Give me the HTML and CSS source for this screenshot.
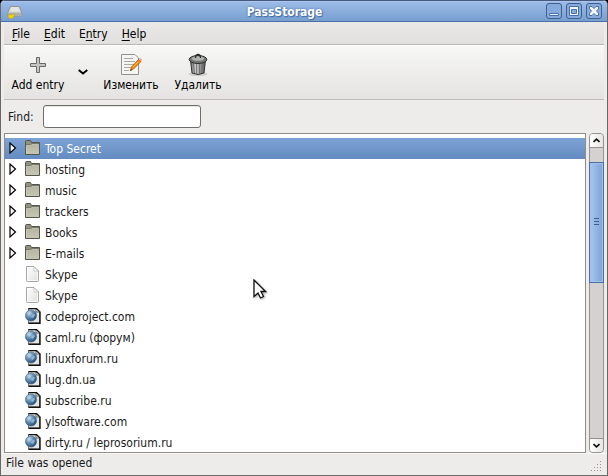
FILE: index.html
```html
<!DOCTYPE html>
<html lang="en">
<head>
<meta charset="utf-8">
<title>PassStorage</title>
<link rel="stylesheet" href="styles.css">
</head>
<body>
<svg width="0" height="0" class="defs">
  <defs>
    <linearGradient id="g-folder" x2="0" y2="1"><stop offset="0" stop-color="#b5b5a0"/><stop offset="1" stop-color="#c6c6b4"/></linearGradient>
    <linearGradient id="g-page" x2="1" y2="1"><stop offset="0" stop-color="#fff"/><stop offset="1" stop-color="#e0e0de"/></linearGradient>
    <linearGradient id="g-can" x2="1" y2="0"><stop offset="0" stop-color="#666"/><stop offset=".35" stop-color="#d0d0d0"/><stop offset="1" stop-color="#555"/></linearGradient>
    <radialGradient id="g-globe" cx=".35" cy=".3" r=".75"><stop offset="0" stop-color="#c5dcec"/><stop offset=".45" stop-color="#6590b8"/><stop offset="1" stop-color="#204a74"/></radialGradient>
    <symbol id="folder" viewBox="0 0 16 16">
      <path d="M.5 14.500V1.500Q.5 .5 1.500 .5H5.500L6.500 2.500H14.500V14.500Z" fill="#929280" stroke="#55564b"/>
      <path d="M1 4.500H5L6.500 3.500H14" fill="none" stroke="#777868"/>
      <path d="M1 5.500H6L7 4.500H14V14H1Z" fill="url(#g-folder)"/>
      <path d="M1.500 13.500V5.500H6L7 4.500H13.500" fill="none" stroke="#d2d2c4" stroke-width=".6"/>
    </symbol>
    <symbol id="page" viewBox="0 0 16 16">
      <path d="M1.500 .5H9L13.500 5V14.500Q13.500 15.500 12.500 15.500H2.500Q1.500 15.500 1.500 14.500Z" fill="url(#g-page)" stroke="#a6a6a2"/>
      <path d="M9 1.500H2.500V14.500H12.500V6" fill="none" stroke="#fff" stroke-width=".7"/>
      <path d="M9 1V5H13Z" fill="#fff" stroke="#bbb" stroke-width=".7"/>
    </symbol>
    <symbol id="web" viewBox="0 0 16 16">
      <path d="M3.500 .5H11.500L14.500 3.500V15.200H3.500Z" fill="#e4e5e2" stroke="#777"/>
      <path d="M3.500 15.200H15V4L11.500.6H3.500" fill="none" stroke="#111" stroke-width="1.400"/>
      <path d="M11 1V4H14.500Z" fill="#fff" stroke="#222" stroke-width=".7"/>
      <circle cx="6" cy="7.500" r="5.600" fill="url(#g-globe)" stroke="#456784" stroke-width=".6"/>
      <path d="M2 5Q4 2.500 6 4L5 6 3 7ZM7 7Q9 5 10 7L8 10 6 9Z" fill="#b4cede" opacity=".65"/>
    </symbol>
  </defs>
</svg>
<div class="window">
  <header class="titlebar">
    <svg class="app-icon" viewBox="0 0 16 14"><path d="M3.500 1.500H12L14.500 7V11H1V7Z" fill="#d9dbd6" stroke="#92958f"/><path d="M1.500 7.500H14.500V11H1.500Z" fill="#aeb0ab"/><path d="M4 3H11.500M3.500 5H12.500" stroke="#eee"/><path d="M1.500 9L4 10 7 8.500V12L5 13.500H2.500L1 12Z" fill="#ecd21c" stroke="#b59b0b" stroke-width=".5"/></svg>
    <h1>PassStorage</h1>
    <div class="controls">
      <svg viewBox="0 0 16 16"><rect x=".5" y=".5" width="15" height="15" rx="2.500"/><path class="glyph" d="M3.500 10.500h9v2h-9z"/></svg>
      <svg viewBox="0 0 16 16"><rect x=".5" y=".5" width="15" height="15" rx="2.500"/><path class="glyph" fill-rule="evenodd" d="M3.500 3.500h9v9h-9zM5.500 6.500v4h5v-4z"/></svg>
      <svg viewBox="0 0 16 16"><rect x=".5" y=".5" width="15" height="15" rx="2.500"/><path class="glyph" d="M3.500 3.500H6L8 5.500 10 3.500H12.500V6L10.500 8 12.500 10V12.500H10L8 10.500 6 12.500H3.500V10L5.500 8 3.500 6Z"/></svg>
    </div>
  </header>
  <nav class="menubar"><span><u>F</u>ile</span><span><u>E</u>dit</span><span>E<u>n</u>try</span><span><u>H</u>elp</span></nav>
  <div class="toolbar">
    <button class="tool add"><svg viewBox="0 0 24 24"><path d="M10.500 4.500h3v6h6v3h-6v6h-3v-6h-6v-3h6z" fill="#c5c5c5" stroke="#696969"/></svg><span>Add entry</span></button>
    <button class="drop"><svg viewBox="0 0 10 6"><path d="M.7 1L5 4.500 9.300 1" fill="none" stroke="#000" stroke-width="1.900"/></svg></button>
    <button class="tool edit"><svg viewBox="0 0 24 24"><path d="M2.500 1.500H16L19.500 5V21.500H2.500Z" fill="#f5f5f4" stroke="#92938f"/><path d="M5 5.500H14M5 8.500H16M5 11.500H15M5 14.500H12M5 17.500H10" stroke="#aaa"/><path d="M19.500 6.500L22 8.500 14.500 16 11.500 17.500 12.500 14Z" fill="#f78b12" stroke="#b95400" stroke-width=".8"/><path d="M19 9L14 14" stroke="#ffc04e"/><path d="M20.300 5.500L22.700 7.500" stroke="#e7a8a0" stroke-width="2"/><path d="M11 18L12 16 13 17Z" fill="#222"/></svg><span>Изменить</span></button>
    <button class="tool del"><svg viewBox="0 0 24 24"><ellipse cx="12" cy="21" rx="9.500" ry="2" fill="#ccc"/><path d="M4.500 7L6 20Q12 23 18 20L19.500 7Z" fill="url(#g-can)" stroke="#333"/><path d="M7.500 10L8.500 20M10.500 11V21M13.500 11V21M16.500 10L15.500 20" stroke="#666" stroke-width=".8"/><ellipse cx="12" cy="6.500" rx="8.800" ry="4" fill="#757773" stroke="#2c2c2c"/><ellipse cx="12" cy="5.500" rx="6" ry="2.300" fill="#b2b4b0"/><path d="M9.500 5Q9.500 1.500 12 1.500T14.500 5" fill="none" stroke="#2c2c2c" stroke-width="1.300"/></svg><span>Удалить</span></button>
  </div>
  <div class="find"><label for="q">Find:</label><input id="q" type="text"></div>
  <main class="content">
    <ul class="list">
      <li class="selected"><svg class="arrow" viewBox="0 0 8 12"><path d="M1 1V11L6.500 6Z"/></svg><svg class="icon"><use href="#folder"/></svg><span>Top Secret</span></li>
      <li><svg class="arrow" viewBox="0 0 8 12"><path d="M1 1V11L6.500 6Z"/></svg><svg class="icon"><use href="#folder"/></svg><span>hosting</span></li>
      <li><svg class="arrow" viewBox="0 0 8 12"><path d="M1 1V11L6.500 6Z"/></svg><svg class="icon"><use href="#folder"/></svg><span>music</span></li>
      <li><svg class="arrow" viewBox="0 0 8 12"><path d="M1 1V11L6.500 6Z"/></svg><svg class="icon"><use href="#folder"/></svg><span>trackers</span></li>
      <li><svg class="arrow" viewBox="0 0 8 12"><path d="M1 1V11L6.500 6Z"/></svg><svg class="icon"><use href="#folder"/></svg><span>Books</span></li>
      <li><svg class="arrow" viewBox="0 0 8 12"><path d="M1 1V11L6.500 6Z"/></svg><svg class="icon"><use href="#folder"/></svg><span>E-mails</span></li>
      <li class="leaf"><svg class="icon"><use href="#page"/></svg><span>Skype</span></li>
      <li class="leaf"><svg class="icon"><use href="#page"/></svg><span>Skype</span></li>
      <li class="leaf"><svg class="icon"><use href="#web"/></svg><span>codeproject.com</span></li>
      <li class="leaf"><svg class="icon"><use href="#web"/></svg><span>caml.ru (форум)</span></li>
      <li class="leaf"><svg class="icon"><use href="#web"/></svg><span>linuxforum.ru</span></li>
      <li class="leaf"><svg class="icon"><use href="#web"/></svg><span>lug.dn.ua</span></li>
      <li class="leaf"><svg class="icon"><use href="#web"/></svg><span>subscribe.ru</span></li>
      <li class="leaf"><svg class="icon"><use href="#web"/></svg><span>ylsoftware.com</span></li>
      <li class="leaf"><svg class="icon"><use href="#web"/></svg><span>dirty.ru / leprosorium.ru</span></li>
    </ul>
    <div class="scrollbar">
      <div class="step up"><svg viewBox="0 0 7 5"><path d="M.5 4L3.500 1.200 6.500 4"/></svg></div>
      <div class="thumb"><i></i><i></i><i></i></div>
      <div class="step down"><svg viewBox="0 0 7 5"><path d="M.5 1L3.500 3.800 6.500 1"/></svg></div>
    </div>
  </main>
  <footer class="status"><span>File was opened</span><svg class="grip" viewBox="0 0 12 12"><path d="M9 1h1v1h-1zM6 4h1v1H6zM9 4h1v1H9zM3 7h1v1H3zM6 7h1v1H6zM9 7h1v1H9zM0 10h1v1H0zM3 10h1v1H3zM6 10h1v1H6zM9 10h1v1H9z"/></svg></footer>
</div>
<svg class="cursor" viewBox="0 0 14 21"><path d="M1 1V17.500L5 14 7.500 19 10.500 17.500 8 12.500H12.500Z" fill="#fff" stroke="#111" stroke-width="1.300"/></svg>
</body>
</html>
```
FILE: styles.css
```css
* { box-sizing: border-box; }
body {
  margin: 0;
  width: 608px;
  height: 476px;
  overflow: hidden;
  background: #000;
  font: 12px/16px "DejaVu Sans Condensed", "DejaVu Sans", sans-serif;
  font-stretch: condensed;
  color: #1a1a1a;
}
.defs { position: absolute; }
svg { display: block; flex: none; }
.window {
  height: 476px;
  display: flex;
  flex-direction: column;
  background: #edeceb;
  border: 1px solid #6b6766;
  border-bottom-color: #6e6e6e;
  border-top: 0;
  border-radius: 5px 5px 0 0;
  overflow: hidden;
}
.titlebar {
  height: 22px;
  flex: none;
  display: flex;
  align-items: center;
  background: linear-gradient(#9dbce8, #789fd1);
  border-top: 1px solid #46597b;
  border-bottom: 1px solid #4a70a8;
  padding: 0 5px 0 6px;
  box-shadow: inset 0 1px #a9c5ed;
}
.app-icon { width: 16px; height: 14px; margin-top: 2px; }
h1 {
  flex: 1;
  margin: 1px 0 0;
  padding-left: 0;
  text-align: center;
  font-size: 12px;
  line-height: 16px;
  color: #fff;
  text-shadow: 0 0 2px #416ba2, 1px 1px 1px #416ba2;
}
.app-icon + h1 { padding-left: 0; }
.controls { display: flex; gap: 4px; }
.controls svg { width: 16px; height: 16px; }
.controls rect { fill: #86aadb; stroke: #405f8c; }
.glyph { fill: #f2f6fc; stroke: #4670a9; }
.menubar {
  height: 23px;
  flex: none;
  display: flex;
  gap: 14px;
  padding: 4px 0 0 8px;
  margin: 0 3px;
  color: #000;
  background: linear-gradient(#eae9e8, #e1e0de);
  border-bottom: 1px solid #bbb9b6;
}
u { text-underline-offset: 2px; text-decoration-thickness: 1px; }
.toolbar {
  height: 55px;
  flex: none;
  display: flex;
  margin: 0 3px;
  padding: 7px 0 0 6px;
  background: linear-gradient(#f7f7f6, #e4e3e1);
  border-top: 1px solid #fff;
  border-bottom: 1px solid #bebbb8;
}
button {
  border: 0;
  padding: 0;
  background: none;
  font: inherit;
  color: #000;
  white-space: nowrap;
}
.tool { display: flex; flex-direction: column; align-items: center; }
.tool svg { width: 24px; height: 24px; }
.add { width: 56px; }
.drop { width: 33px; display: flex; justify-content: center; padding: 16px 0 0 1px; }
.drop svg { width: 10px; height: 6px; }
.edit { width: 64px; }
.del { width: 56px; margin-left: 7px; }
.find {
  height: 33px;
  flex: none;
  display: flex;
  align-items: center;
  padding: 0 0 0 7px;
}
.find label { width: 35px; }
.find input {
  width: 158px;
  height: 23px;
  border: 1px solid #6e6e6b;
  border-radius: 3px;
  background: #fff;
  box-shadow: inset 0 1px #e4e4e4;
}
.content { height: 320px; flex: none; display: flex; gap: 3px; padding: 0 2px 0 3px; }
.list {
  width: 582px;
  margin: 0;
  padding: 4px 0 0;
  list-style: none;
  background: #fff;
  border: 1px solid #908d89;
  overflow: hidden;
}
li { height: 21px; display: flex; align-items: center; padding-left: 4px; }
.leaf { padding-left: 20px; }
li span { margin-left: 4px; padding-top: 1px; white-space: pre; }
.selected { color: #fff; background: linear-gradient(#7da2d5, #648cc2); }
.arrow { width: 8px; height: 12px; margin: -2px 8px 0 0; fill: #fff; stroke: #000; stroke-width: 1.2px; }
.icon { width: 16px; height: 16px; margin-top: -1px; }
.scrollbar {
  width: 15px;
  display: flex;
  flex-direction: column;
  background: #d3d2d0;
  border: 1px solid #96938f;
  border-radius: 4px;
}
.step {
  height: 14px;
  flex: none;
  display: flex;
  align-items: center;
  justify-content: center;
  background: linear-gradient(90deg, #fff, #e5e4e2);
}
.step svg { width: 7px; height: 5px; fill: none; stroke: #111; stroke-width: 1.7px; }
.up { border-bottom: 1px solid #96938f; border-radius: 3px 3px 0 0; }
.down { margin-top: auto; border-top: 1px solid #96938f; border-radius: 0 0 3px 3px; }
.thumb {
  height: 121px;
  margin: 14px -1px 0;
  border: 1px solid #4b70a5;
  background: linear-gradient(90deg, #a9c6ec, #7da3d7);
  box-shadow: inset 0 0 0 1px #a2c0e8;
  display: flex;
  flex-direction: column;
  align-items: center;
  gap: 2px;
  padding-top: 55px;
}
.thumb i { width: 5px; height: 1px; background: #3c5e8e; }
.status {
  flex: 1;
  display: flex;
  justify-content: space-between;
  padding: 1px 4px 0 5px;
  border-top: 1px solid #faf9f8;
}
.grip { width: 12px; height: 12px; margin-top: 5px; fill: #999692; }
.cursor { position: absolute; left: 253px; top: 279px; width: 14px; height: 21px; filter: drop-shadow(1px 1px 1px #0005); }
```
